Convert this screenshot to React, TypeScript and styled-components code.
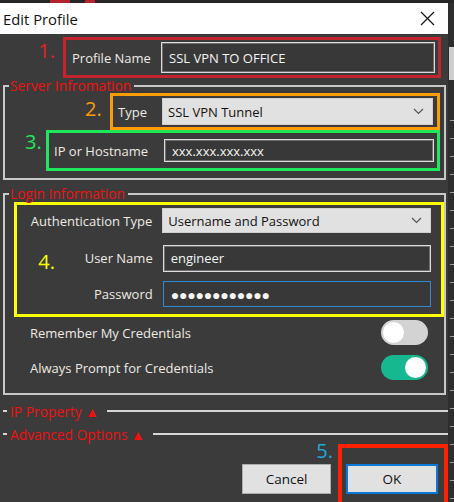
import styled, { createGlobalStyle } from "styled-components";

const GlobalStyle = createGlobalStyle`
  body {
    margin: 0;
    background: #3b3b3b;
    font-family: "Open Sans", "Noto Sans", sans-serif;
  }
`;

const Frame = styled.div`
  width: 454px;
  height: 502px;
  display: flex;
  flex-direction: column;
  overflow: hidden;
  background: #3b3b3b;
`;

const TopStrip = styled.div`
  height: 3px;
  background: #262626;
  display: flex;
`;

const TopMark = styled.span<{ $ml: number; $w: number }>`
  margin-left: ${({ $ml }) => $ml}px;
  width: ${({ $w }) => $w}px;
  background: #b3232b;
`;

const Main = styled.div`
  flex: 1;
  display: flex;
  min-height: 0;
`;

const Dialog = styled.div`
  width: 448px;
  display: flex;
  flex-direction: column;
`;

const TitleBar = styled.div`
  height: 31px;
  flex-shrink: 0;
  background: #fff;
  display: flex;
  align-items: center;
  justify-content: space-between;
  padding: 0 13px 0 3px;
  font-size: 14.8px;
  color: #111;
`;

const Body = styled.div`
  flex: 1;
  display: flex;
  flex-direction: column;
  background: #3b3b3b;
  color: #eeeae4;
  font-size: 13px;
`;

const SideStrip = styled.div`
  width: 6px;
  background: #2e2e2e;
  display: flex;
  flex-direction: column;
`;

const SideBlock = styled.div`
  margin: 44px 0 0 1px;
  height: 33px;
  background: #cfcfcf;
`;

const SideRules = styled.div`
  flex: 1;
  margin: 40px 0 0 2px;
  background: repeating-linear-gradient(
    to bottom,
    #9c9c9c 0,
    #9c9c9c 1px,
    transparent 1px,
    transparent 18px
  );
`;

const AnnotRow = styled.div<{ $pl: number; $mt?: number }>`
  display: flex;
  align-items: flex-start;
  padding-left: ${({ $pl }) => $pl}px;
  margin-top: ${({ $mt }) => $mt ?? 0}px;
`;

const Num = styled.span<{ $color: string; $w: number; $mr: number; $pt: number }>`
  width: ${({ $w }) => $w}px;
  margin-right: ${({ $mr }) => $mr}px;
  padding-top: ${({ $pt }) => $pt}px;
  color: ${({ $color }) => $color};
  font-size: 20px;
  line-height: 20px;
  text-align: right;
  flex-shrink: 0;
`;

const MarkBox = styled.div<{ $color: string; $w: number; $h: number; $pl: number; $pr: number }>`
  box-sizing: border-box;
  width: ${({ $w }) => $w}px;
  height: ${({ $h }) => $h}px;
  border: 3px solid ${({ $color }) => $color};
  padding: 0 ${({ $pr }) => $pr}px 0 ${({ $pl }) => $pl}px;
  display: flex;
  align-items: center;
  justify-content: space-between;
`;

const TextInput = styled.div<{ $w: number; $h: number; $focus?: boolean }>`
  box-sizing: border-box;
  width: ${({ $w }) => $w}px;
  height: ${({ $h }) => $h}px;
  background: #383838;
  border: 1px solid ${({ $focus }) => ($focus ? "#2b8ad8" : "#dcdcdc")};
  box-shadow: inset 0 0 0 1px ${({ $focus }) => ($focus ? "#3a3a3a" : "#6e6e6e")};
  padding-left: 7px;
  display: flex;
  align-items: center;
  color: #f4f4f4;
  font-size: 13px;
`;

const Dots = styled.span`
  font-size: 14px;
  letter-spacing: -0.2px;
`;

const Select = styled.div<{ $w: number; $h: number }>`
  box-sizing: border-box;
  width: ${({ $w }) => $w}px;
  height: ${({ $h }) => $h}px;
  background: #e1e1e1;
  border: 1px solid #cfcfcf;
  padding: 0 8px 0 5px;
  display: flex;
  align-items: center;
  justify-content: space-between;
  color: #111;
  font-size: 13px;
`;

const GroupBox = styled.fieldset<{ $mt?: number; $pb: number }>`
  margin: ${({ $mt }) => $mt ?? 0}px 2px 0 3px;
  padding: 0 0 ${({ $pb }) => $pb}px;
  border: 2px solid #c8c8c8;
  min-width: 0;
`;

const Legend = styled.legend`
  color: #f01010;
  font-size: 13.8px;
  line-height: 16px;
  padding: 0 3px 0 1px;
  margin-left: 4px;
`;

const YellowBox = styled.div`
  box-sizing: border-box;
  margin-left: 9px;
  width: 430px;
  height: 115px;
  border: 3px solid #ffff00;
  padding: 3px 10px 0 0;
  display: flex;
  flex-direction: column;
`;

const FormRow = styled.div<{ $mt: number }>`
  display: flex;
  align-items: center;
  margin-top: ${({ $mt }) => $mt}px;
`;

const FormLabel = styled.div`
  width: 136px;
  margin-right: 10px;
  display: flex;
  justify-content: flex-end;
  align-items: center;
`;

const LabelWithNum = styled(FormLabel)`
  justify-content: space-between;
  padding-left: 21px;
  box-sizing: border-box;
`;

const ToggleRow = styled.div<{ $mt: number }>`
  display: flex;
  align-items: center;
  justify-content: space-between;
  height: 25px;
  margin-top: ${({ $mt }) => $mt}px;
  padding: 0 16px 0 25px;
`;

const Toggle = styled.div<{ $on: boolean }>`
  box-sizing: border-box;
  width: 47px;
  height: 25px;
  border-radius: 13px;
  background: ${({ $on }) => ($on ? "#16b98f" : "#d3d3d3")};
  padding: 2px;
  display: flex;
  justify-content: ${({ $on }) => ($on ? "flex-end" : "flex-start")};
`;

const Knob = styled.div`
  width: 21px;
  height: 21px;
  border-radius: 50%;
  background: #fff;
`;

const CollapseRow = styled.div<{ $mt: number }>`
  height: 20px;
  display: flex;
  align-items: center;
  margin-top: ${({ $mt }) => $mt}px;
`;

const Rule = styled.div<{ $grow?: boolean }>`
  height: 2px;
  background: #d6d6d6;
  width: 4px;
  margin-left: 3px;
  flex: ${({ $grow }) => ($grow ? 1 : "none")};
`;

const CollapseTitle = styled.span`
  color: #f01010;
  font-size: 13.8px;
  margin: 0 5px 0 3px;
`;

const ButtonBar = styled.div`
  flex: 1;
  display: flex;
  justify-content: flex-end;
  align-items: stretch;
`;

const CancelCol = styled.div`
  display: flex;
  flex-direction: column;
  align-items: flex-end;
  margin-right: 7px;
`;

const Button = styled.div<{ $primary?: boolean; $w: number }>`
  box-sizing: border-box;
  width: ${({ $w }) => $w}px;
  height: 30px;
  background: #e1e1e1;
  border: ${({ $primary }) => ($primary ? "2px solid #0a78d4" : "1px solid #adadad")};
  display: flex;
  align-items: center;
  justify-content: center;
  color: #111;
  font-size: 13.5px;
`;

const OkFrame = styled.div`
  box-sizing: border-box;
  width: 110px;
  border: 4px solid #ff2200;
  border-bottom: none;
  padding: 16px 6px 0 4px;
`;

const CloseIcon = () => (
  <svg width="15" height="15" viewBox="0 0 15 15">
    <path d="M1 1 L14 14 M14 1 L1 14" stroke="#1a1a1a" strokeWidth="1.3" fill="none" />
  </svg>
);

const Chevron = () => (
  <svg width="11" height="7" viewBox="0 0 11 7">
    <path d="M1 1 L5.5 5.5 L10 1" stroke="#555" strokeWidth="1.2" fill="none" />
  </svg>
);

export default function App() {
  return (
    <Frame>
      <GlobalStyle />
      <TopStrip>
        <TopMark $ml={50} $w={20} />
        <TopMark $ml={15} $w={10} />
      </TopStrip>
      <Main>
        <Dialog>
          <TitleBar>
            <span>Edit Profile</span>
            <CloseIcon />
          </TitleBar>
          <Body>
            <AnnotRow $pl={38} $mt={3}>
              <Num $color="#e4202a" $w={17} $mr={8} $pt={4}>1.</Num>
              <MarkBox $color="#c3242e" $w={378} $h={41} $pl={6} $pr={3}>
                <span>Profile Name</span>
                <TextInput $w={274} $h={31}>SSL VPN TO OFFICE</TextInput>
              </MarkBox>
            </AnnotRow>

            <GroupBox $pb={7}>
              <Legend>Server Infromation</Legend>
              <AnnotRow $pl={80} $mt={-1}>
                <Num $color="#ff9c00" $w={15} $mr={10} $pt={6}>2.</Num>
                <MarkBox $color="#ff9c00" $w={330} $h={37} $pl={5} $pr={4}>
                  <span>Type</span>
                  <Select $w={271} $h={27}>
                    <span>SSL VPN Tunnel</span>
                    <Chevron />
                  </Select>
                </MarkBox>
              </AnnotRow>
              <AnnotRow $pl={20}>
                <Num $color="#1ee85a" $w={15} $mr={6} $pt={2}>3.</Num>
                <MarkBox $color="#1ee85a" $w={394} $h={41} $pl={5} $pr={3}>
                  <span>IP or Hostname</span>
                  <TextInput $w={270} $h={23}>xxx.xxx.xxx.xxx</TextInput>
                </MarkBox>
              </AnnotRow>
            </GroupBox>

            <GroupBox $mt={6} $pb={13}>
              <Legend>Login Information</Legend>
              <YellowBox>
                <FormRow $mt={0}>
                  <FormLabel>Authentication Type</FormLabel>
                  <Select $w={270} $h={25}>
                    <span>Username and Password</span>
                    <Chevron />
                  </Select>
                </FormRow>
                <FormRow $mt={11}>
                  <LabelWithNum>
                    <Num $color="#ffff00" $w={17} $mr={0} $pt={8}>4.</Num>
                    <span>User Name</span>
                  </LabelWithNum>
                  <TextInput $w={269} $h={27}>engineer</TextInput>
                </FormRow>
                <FormRow $mt={9}>
                  <FormLabel>Password</FormLabel>
                  <TextInput $w={269} $h={26} $focus>
                    <Dots>●●●●●●●●●●●●</Dots>
                  </TextInput>
                </FormRow>
              </YellowBox>
              <ToggleRow $mt={3}>
                <span>Remember My Credentials</span>
                <Toggle $on={false}>
                  <Knob />
                </Toggle>
              </ToggleRow>
              <ToggleRow $mt={10}>
                <span>Always Prompt for Credentials</span>
                <Toggle $on>
                  <Knob />
                </Toggle>
              </ToggleRow>
            </GroupBox>

            <CollapseRow $mt={6}>
              <Rule />
              <CollapseTitle>IP Property ▲</CollapseTitle>
              <Rule $grow />
            </CollapseRow>
            <CollapseRow $mt={3}>
              <Rule />
              <CollapseTitle>Advanced Options ▲</CollapseTitle>
              <Rule $grow />
            </CollapseRow>

            <ButtonBar>
              <CancelCol>
                <Num $color="#1fa8d8" $w={17} $mr={-2} $pt={0} style={{ marginTop: -3 }}>5.</Num>
                <Button $w={89} style={{ marginTop: 3 }}>Cancel</Button>
              </CancelCol>
              <OkFrame>
                <Button $primary $w={92}>OK</Button>
              </OkFrame>
            </ButtonBar>
          </Body>
        </Dialog>
        <SideStrip>
          <SideBlock />
          <SideRules />
        </SideStrip>
      </Main>
    </Frame>
  );
}
